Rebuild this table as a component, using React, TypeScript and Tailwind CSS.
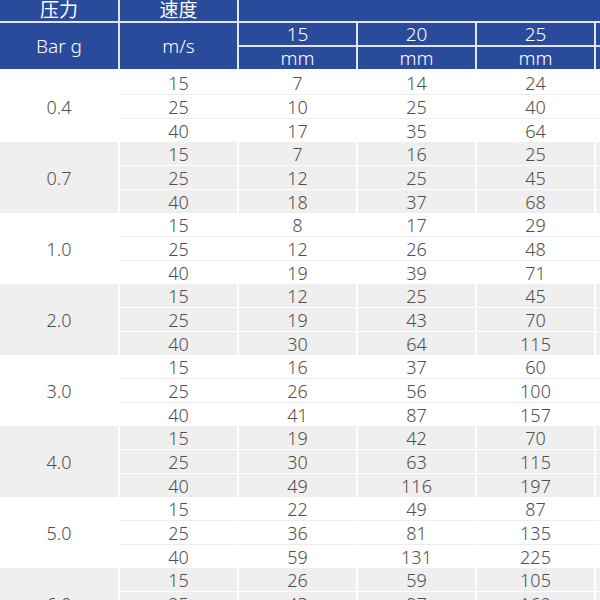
const groups: { p: string; rows: string[][] }[] = [
  { p: "0.4", rows: [["15", "7", "14", "24", "38"], ["25", "10", "25", "40", "62"], ["40", "17", "35", "64", "100"]] },
  { p: "0.7", rows: [["15", "7", "16", "25", "40"], ["25", "12", "25", "45", "70"], ["40", "18", "37", "68", "108"]] },
  { p: "1.0", rows: [["15", "8", "17", "29", "46"], ["25", "12", "26", "48", "76"], ["40", "19", "39", "71", "120"]] },
  { p: "2.0", rows: [["15", "12", "25", "45", "70"], ["25", "19", "43", "70", "115"], ["40", "30", "64", "115", "180"]] },
  { p: "3.0", rows: [["15", "16", "37", "60", "95"], ["25", "26", "56", "100", "155"], ["40", "41", "87", "157", "245"]] },
  { p: "4.0", rows: [["15", "19", "42", "70", "110"], ["25", "30", "63", "115", "180"], ["40", "49", "116", "197", "310"]] },
  { p: "5.0", rows: [["15", "22", "49", "87", "135"], ["25", "36", "81", "135", "215"], ["40", "59", "131", "225", "355"]] },
  { p: "6.0", rows: [["15", "26", "59", "105", "165"], ["25", "43", "97", "162", "255"], ["40", "68", "155", "260", "410"]] },
];

const sizes = ["15", "20", "25", "32"];

function Header() {
  return (
    <div className="flex h-[71px] bg-[#2a4a9c] text-white border-b-2 border-white">
      <div className="w-[118px] shrink-0 flex flex-col">
        <div className="h-[23px] w-full border-b-2 border-[#e2e6f2] text-center text-[19px] leading-[21px] font-normal">压力</div>
        <div className="flex-1 w-full flex items-center justify-center text-[19px] leading-none">Bar g</div>
      </div>
      <div className="w-[119px] shrink-0 border-l-2 border-[#e2e6f2] flex flex-col">
        <div className="h-[23px] w-full border-b-2 border-[#e2e6f2] text-center text-[19px] leading-[21px] font-normal">速度</div>
        <div className="flex-1 w-full flex items-center justify-center text-[19px] leading-none">m/s</div>
      </div>
      <div className="flex-1 border-l-2 border-[#e2e6f2] flex flex-col">
        <div className="h-[23px] border-b-2 border-[#e2e6f2]" />
        <div className="flex flex-1">
          {sizes.map((s, i) => (
            <div key={s} className={`shrink-0 flex flex-col ${i === 0 ? "w-[117px]" : "w-[119px] border-l-2 border-[#e2e6f2]"}`}>
              <div className="h-[24px] border-b-2 border-[#e2e6f2] flex items-center justify-center text-[19px] leading-none">{s}</div>
              <div className="flex-1 flex items-center justify-center text-[19px] leading-none">mm</div>
            </div>
          ))}
        </div>
      </div>
    </div>
  );
}

function Group({ p, rows, grey }: { p: string; rows: string[][]; grey: boolean }) {
  const line = grey ? "border-t border-white" : "border-t border-[#eeeeee]";
  return (
    <div className={`flex h-[71px] ${grey ? "bg-[#efefef]" : "bg-white"}`}>
      <div className="w-[118px] shrink-0 flex items-center justify-center">{p}</div>
      <div className="flex-1 flex flex-col">
        {rows.map((r, ri) => (
          <div key={ri} className={`flex ${ri > 0 ? "h-[24px]" : "h-[23px]"}`}>
            {r.map((v, ci) => (
              <div
                key={ci}
                className={`w-[119px] shrink-0 border-l-2 border-l-white flex items-center justify-center ${ri > 0 ? line : ""}`}
              >
                {v}
              </div>
            ))}
          </div>
        ))}
      </div>
    </div>
  );
}

export default function App() {
  return (
    <div className="w-[600px] h-[600px] overflow-hidden bg-white font-['Noto_Sans','Noto_Sans_CJK_SC',sans-serif] font-light">
      <div className="w-[720px]">
        <Header />
        <div className="text-[18px] text-[#4f4f4f] leading-none">
          {groups.map((g, i) => (
            <Group key={g.p} p={g.p} rows={g.rows} grey={i % 2 === 1} />
          ))}
        </div>
      </div>
    </div>
  );
}
